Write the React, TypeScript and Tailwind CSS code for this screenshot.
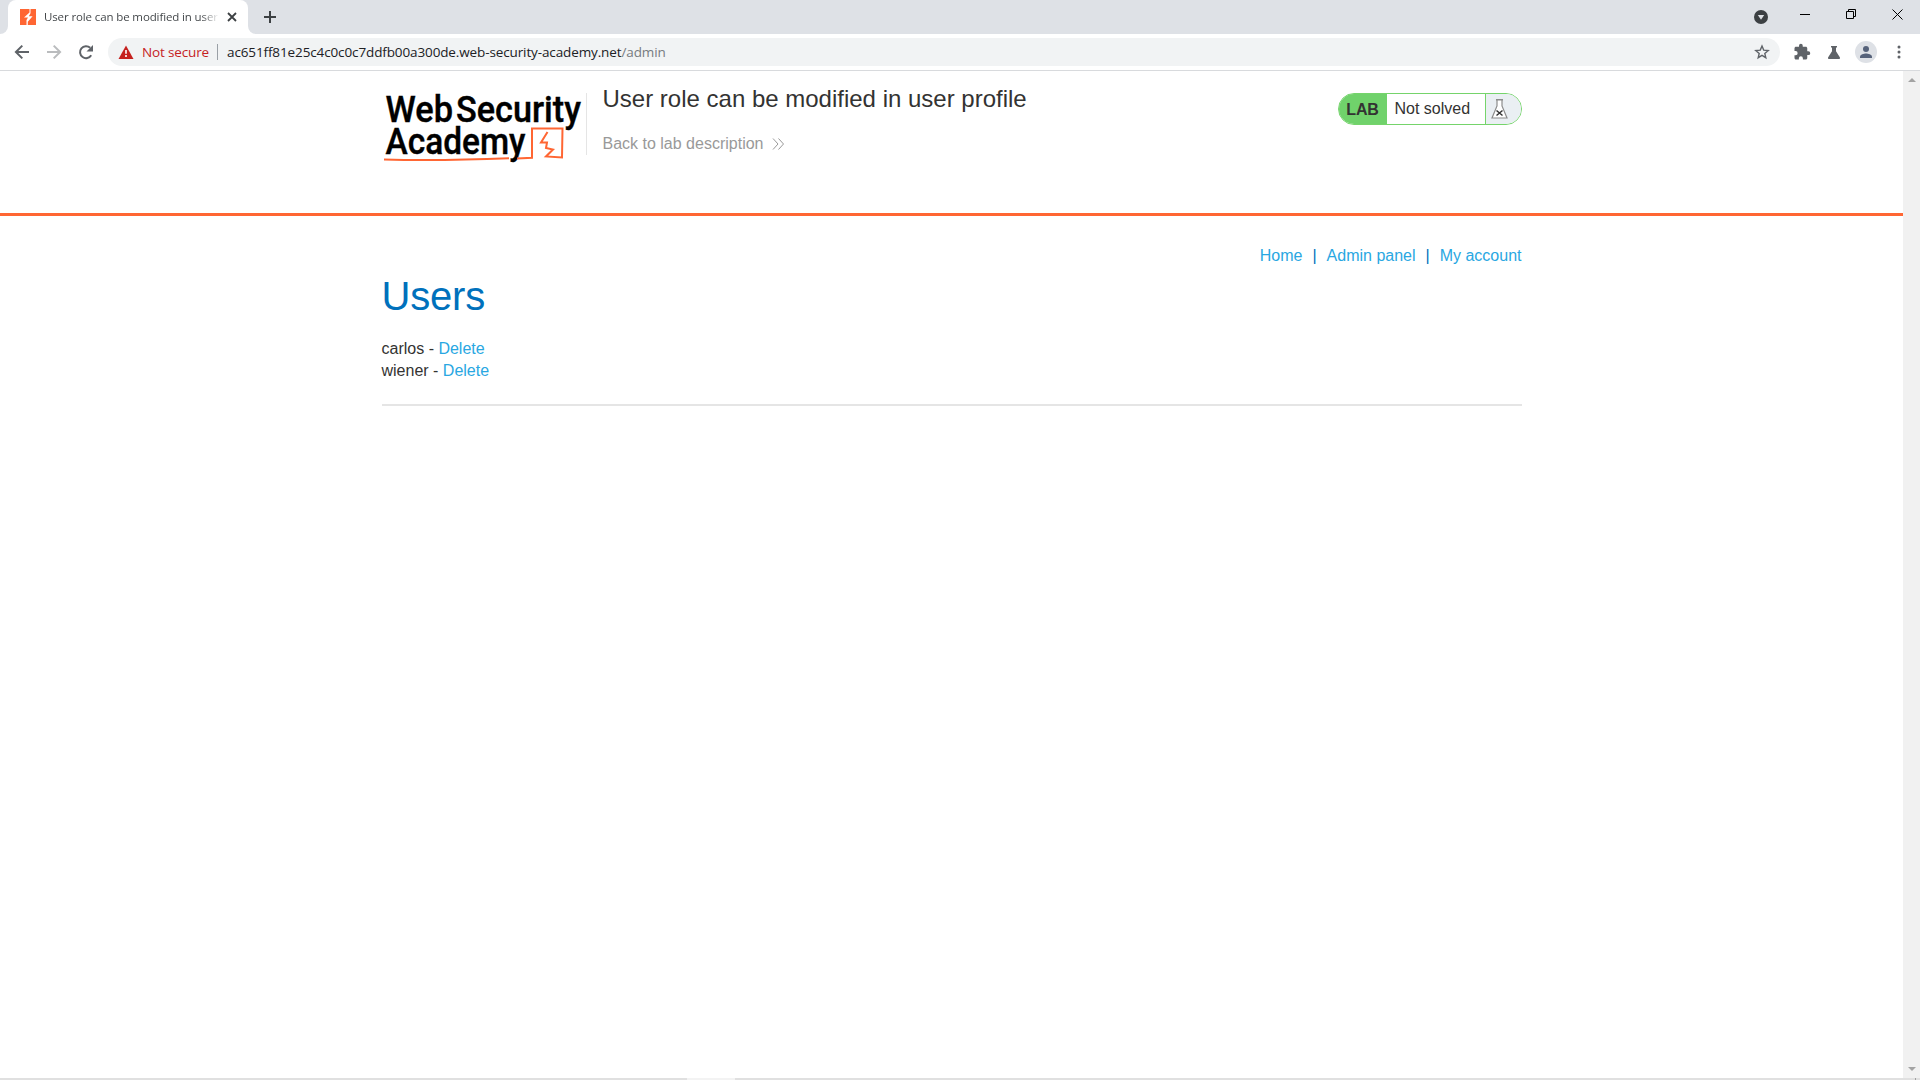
import React from "react";

function BurpMark() {
  return (
    <svg width="16" height="16" viewBox="0 0 16 16" className="shrink-0">
      <rect width="16" height="16" fill="#ff6633" />
      <path d="M9.500 0v3.400L4 8.400h4L6.500 11v5h1.300v-3.200L12.600 7.200H8.800L10.500 4.200V0z" fill="#fff" />
    </svg>
  );
}

function TabStrip() {
  return (
    <div className="flex h-[34px] bg-[#dee1e6]">
      <div className="flex w-2 items-end bg-white">
        <div className="h-full w-2 rounded-br-lg bg-[#dee1e6]" />
      </div>
      <div className="flex w-[240px] items-center rounded-t-lg bg-white pl-3">
        <BurpMark />
        <span className="ml-2 w-[175px] overflow-hidden whitespace-nowrap bg-gradient-to-r from-[#3c4043] from-90% to-transparent bg-clip-text font-['Open_Sans',sans-serif] text-[11.5px] leading-4 tracking-[-0.12px] text-transparent">
          User role can be modified in user profile
        </span>
        <svg width="10" height="10" viewBox="0 0 10 10" className="ml-[8px]">
          <path d="M1 1l8 8M9 1L1 9" stroke="#3c4043" strokeWidth="1.8" />
        </svg>
      </div>
      <div className="w-2 bg-white">
        <div className="h-full rounded-bl-lg bg-[#dee1e6]" />
      </div>
      <svg width="12" height="12" viewBox="0 0 12 12" className="ml-2 mt-[11px]">
        <path d="M6 0v12M0 6h12" stroke="#3c4043" strokeWidth="2" />
      </svg>
      <div className="ml-auto flex pr-[17px]">
        <svg width="14" height="14" viewBox="0 0 14 14" className="mt-[10px]">
          <circle cx="7" cy="7" r="7" fill="#3c4043" />
          <path d="M3.8 5h6.4L7 9.8z" fill="#dee1e6" />
        </svg>
        <svg width="10" height="10" viewBox="0 0 10 10" className="ml-[32px] mt-[9px]">
          <path d="M0 5.5h10" stroke="#000" />
        </svg>
        <svg width="10" height="10" viewBox="0 0 10 10" className="ml-[36px] mt-[9px]">
          <path d="M.5 2.5h7v7h-7zM2.5 2.5v-2h7v7h-2" fill="none" stroke="#000" />
        </svg>
        <svg width="11" height="11" viewBox="0 0 11 11" className="ml-[36px] mt-[9px]">
          <path d="M.5.5l10 10M10.5.5l-10 10" stroke="#000" />
        </svg>
      </div>
    </div>
  );
}

function Toolbar() {
  return (
    <div className="flex h-[37px] items-center border-b border-[#d8dadd] bg-white pl-[14px] font-['Open_Sans',sans-serif] text-[13.5px]">
      <svg width="16" height="16" viewBox="0 0 16 16">
        <path d="M15 8H2M8.3 1.6L1.9 8l6.4 6.4" fill="none" stroke="#5f6368" strokeWidth="2" />
      </svg>
      <svg width="16" height="16" viewBox="0 0 16 16" className="ml-4">
        <path d="M1 8h13M7.7 1.6L14.1 8l-6.4 6.4" fill="none" stroke="#babcbe" strokeWidth="2" />
      </svg>
      <svg width="16" height="16" viewBox="0 0 16 16" className="ml-4">
        <path d="M13.2 11.2A6 6 0 1 1 12.2 3.8" fill="none" stroke="#5f6368" strokeWidth="2" />
        <path d="M15 1v6.5H8.5z" fill="#5f6368" />
      </svg>
      <div className="ml-[14px] flex h-7 w-[1672px] items-center rounded-full bg-[#f1f3f4] pl-[10px]">
        <svg width="16" height="14" viewBox="0 0 16 14">
          <path d="M8 .5L15.5 14H.5z" fill="#c5221f" />
          <path d="M8 5v3.8M8 10v2" stroke="#fff" strokeWidth="1.6" />
        </svg>
        <span className="ml-2 w-[67px] whitespace-nowrap tracking-[-0.15px] text-[#c5221f]">Not secure</span>
        <span className="ml-2 h-4 w-px bg-[#9aa0a6]" />
        <span className="ml-[9px] whitespace-nowrap tracking-[-0.12px] text-[#202124]">
          ac651ff81e25c4c0c0c7ddfb00a300de.web-security-academy.net<span className="text-[#777b80]">/admin</span>
        </span>
        <svg width="16" height="16" viewBox="0 0 16 16" className="ml-auto mr-[10px]">
          <path d="M8 2l1.7 4.1 4.5.4-3.4 2.9 1 4.3L8 11.4l-3.8 2.3 1-4.3-3.4-2.9 4.5-.4z" fill="none" stroke="#5f6368" strokeWidth="1.4" />
        </svg>
      </div>
      <svg width="18" height="18" viewBox="0 0 24 24" className="ml-[13px]">
        <path d="M20.5 11H19V7c0-1.1-.9-2-2-2h-4V3.5a2.5 2.5 0 0 0-5 0V5H4c-1.1 0-2 .9-2 2v3.8h1.5a2.7 2.7 0 0 1 0 5.4H2V20c0 1.1.9 2 2 2h3.8v-1.5a2.7 2.7 0 0 1 5.4 0V22H17c1.1 0 2-.9 2-2v-4h1.5a2.5 2.5 0 0 0 0-5z" fill="#5f6368" />
      </svg>
      <svg width="12" height="13" viewBox="0 0 12 13" className="ml-[17px]">
        <path d="M3 0h6v1.5H8v3.7l3.8 6.1c.5.8 0 1.7-.8 1.7H1c-.8 0-1.3-.9-.8-1.7L4 5.2V1.5H3z" fill="#5f6368" />
      </svg>
      <svg width="22" height="22" viewBox="0 0 22 22" className="ml-[15px]">
        <circle cx="11" cy="11" r="11" fill="#dee1e6" />
        <circle cx="11" cy="8" r="3" fill="#56627a" />
        <path d="M5 17v-1.5c0-2 4-3.1 6-3.1s6 1.1 6 3.1V17z" fill="#56627a" />
      </svg>
      <svg width="4" height="14" viewBox="0 0 4 14" className="ml-5">
        <path d="M2 2h.01M2 7h.01M2 12h.01" stroke="#5f6368" strokeWidth="3" strokeLinecap="round" />
      </svg>
    </div>
  );
}

function AcademyLogo() {
  return (
    <svg width="202" height="74" viewBox="382 90 202 74" className="mt-[19px] overflow-visible">
      <g fill="#000" stroke="#000" strokeWidth="0.4" fontFamily="Roboto, sans-serif" fontSize="37.5" fontWeight="500">
        <text x="385.5" y="121.5" textLength="67.5" lengthAdjust="spacingAndGlyphs">Web</text>
        <text x="456" y="121.5" textLength="125" lengthAdjust="spacingAndGlyphs">Security</text>
        <text x="385.5" y="153.7" textLength="140" lengthAdjust="spacingAndGlyphs">Academy</text>
      </g>
      <path d="M384 159.5Q440 161 509 158.2M517 158.5L532 157.7 532 128.5 562.5 128.5 562 157.5 546 156.5 553 149.5 546 148 547 142.5 541 142.5 547.5 132" fill="none" stroke="#ff6633" strokeWidth="2" />
    </svg>
  );
}

function LabStatus() {
  return (
    <div className="mt-[22px] flex h-8 w-[184px] overflow-hidden rounded-full border border-[#75d46b] text-base text-[#333332]">
      <span className="flex w-12 items-center justify-center bg-[#70d26b] pt-px font-bold tracking-[-0.2px]">LAB</span>
      <span className="flex flex-1 items-center pb-px pl-2">Not solved</span>
      <span className="flex w-[36px] items-center border-l border-[#75d46b] bg-[#eaeff3] pl-[5px]">
        <svg width="17" height="20" viewBox="0 0 17 20" className="shrink-0">
          <path d="M6 1v6L1 19h15L11 7V1" fill="#fff" stroke="#8c8c8c" strokeWidth="1.2" />
          <path d="M5 .8h7" stroke="#8c8c8c" strokeWidth="1.4" />
          <path d="M5.500 11.500l6 5M11.500 11.500l-6 5" stroke="#333" strokeWidth="1.5" />
        </svg>
      </span>
    </div>
  );
}

const users = ["carlos", "wiener"];

function Page() {
  return (
    <main className="min-w-0 flex-1 bg-white">
      <header className="h-[145px] border-b-[3px] border-[#ff6633]">
        <div className="mx-auto flex w-[1140px] items-start">
          <AcademyLogo />
          <div className="ml-[2px] mt-[22px] h-[62px] w-px bg-[#e5e5e5]" />
          <div className="ml-[16px] mt-[14px]">
            <h2 className="whitespace-nowrap text-2xl leading-7 text-[#333332]">User role can be modified in user profile</h2>
            <a className="mt-[20px] flex items-center text-base leading-[22px] text-[#999]">
              Back to lab description
              <svg width="13" height="12" viewBox="0 0 13 12" className="ml-[9px]">
                <path d="M1 .5L6 6l-5 5.5M6.5.5l5 5.5-5 5.5" fill="none" stroke="#999" />
              </svg>
            </a>
          </div>
          <div className="ml-auto"><LabStatus /></div>
        </div>
      </header>
      <section className="mx-auto w-[1140px] text-base leading-[22px] text-[#333332]">
        <nav className="flex justify-end pt-[29px] text-[#29a7e2]">
          <a>Home</a>
          <span className="mx-[10px] text-[#0071bc]">|</span>
          <a>Admin panel</a>
          <span className="mx-[10px] text-[#0071bc]">|</span>
          <a>My account</a>
        </nav>
        <h1 className="mt-[6px] text-[40px] leading-[46px] tracking-[-0.2px] text-[#0071bc]">Users</h1>
        <div className="mt-[19px]">
          {users.map((name) => (
            <div key={name}>{name} - <a className="text-[#29a7e2]">Delete</a></div>
          ))}
        </div>
        <hr className="mt-[22px] border-t-2 border-[#e5e5e5]" />
      </section>
    </main>
  );
}

function Scrollbar() {
  return (
    <div className="flex w-[17px] flex-col items-center justify-between bg-[#f1f1f1] pb-[7px] pt-[7px]">
      <svg width="8" height="4" viewBox="0 0 8 4"><path d="M0 4L4 0l4 4z" fill="#a3a3a3" /></svg>
      <svg width="8" height="4" viewBox="0 0 8 4"><path d="M0 0l4 4 4-4z" fill="#a3a3a3" /></svg>
    </div>
  );
}

export default function App() {
  return (
    <div className="flex h-[1080px] w-[1920px] flex-col overflow-hidden bg-white font-['Liberation_Sans',Arial,sans-serif]">
      <TabStrip />
      <Toolbar />
      <div className="flex min-h-0 flex-1">
        <Page />
        <Scrollbar />
      </div>
      <div className="flex h-[2px] bg-[#e0e0e0]">
        <span className="ml-[687px] w-12 bg-[#f3f3f3]" />
        <span className="ml-auto mr-1 w-px bg-[#a0a0a0]" />
      </div>
    </div>
  );
}
